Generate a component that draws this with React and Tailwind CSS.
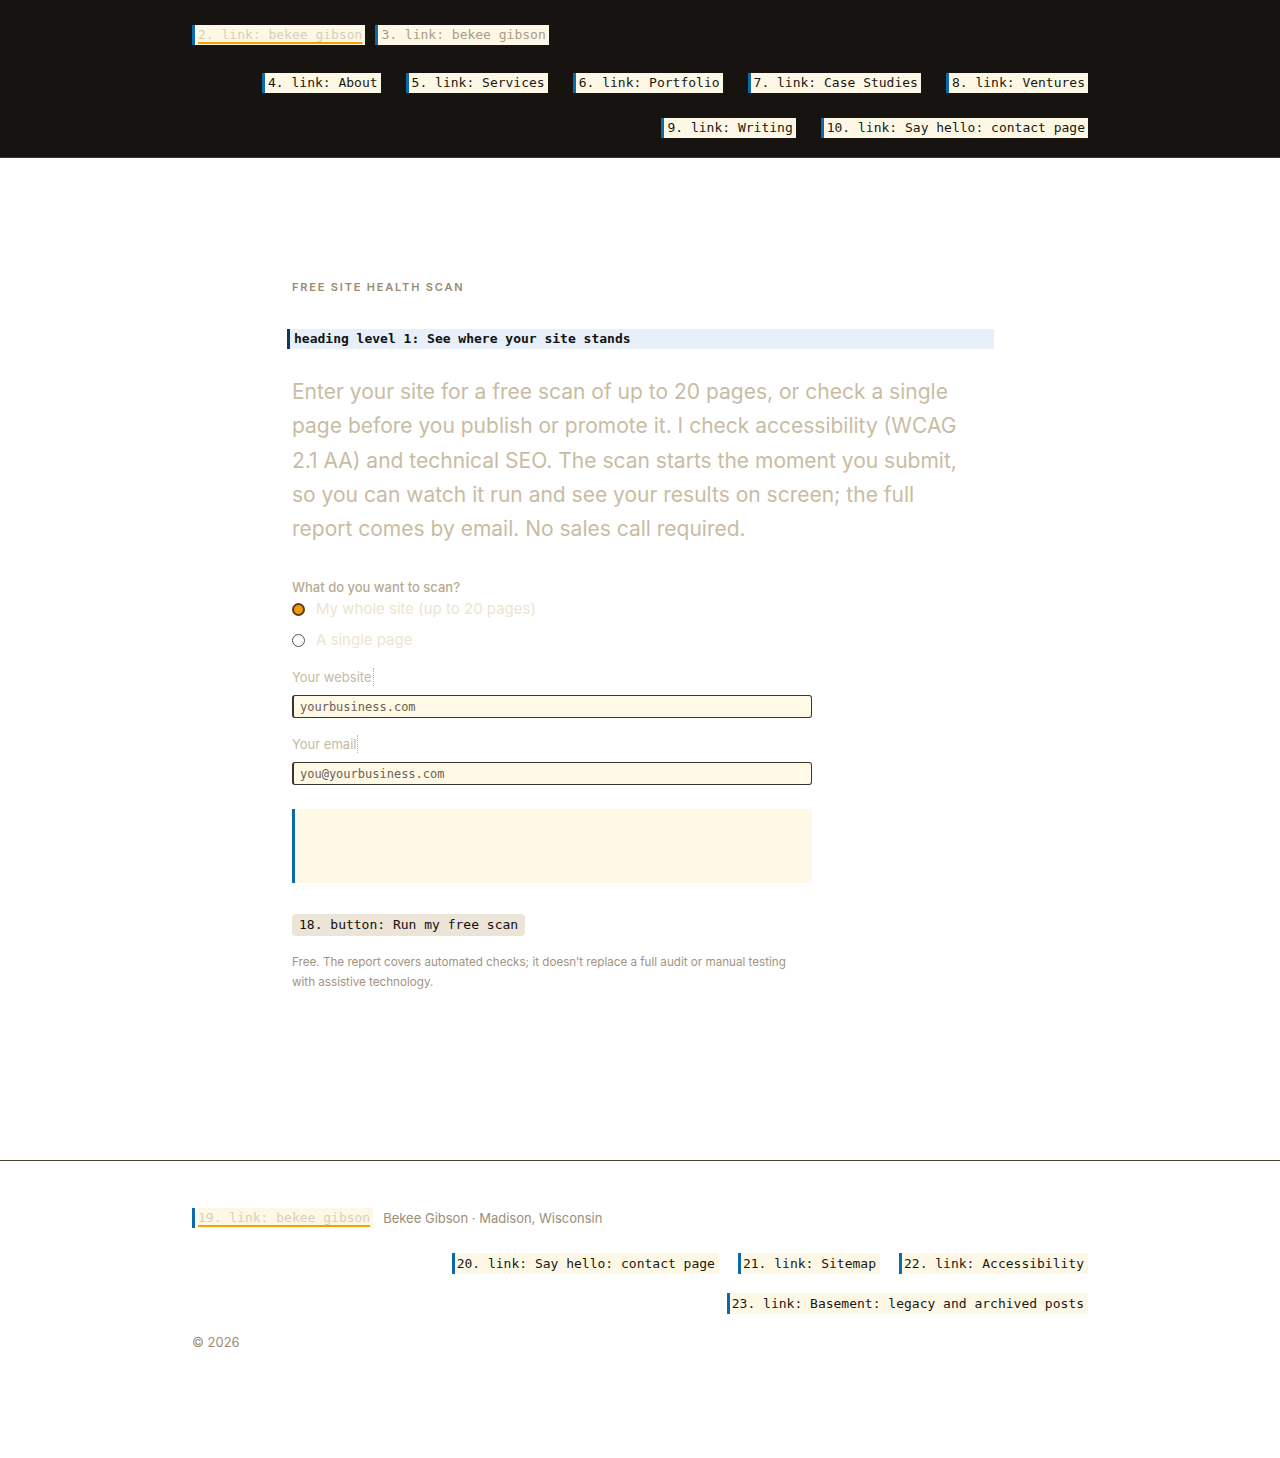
import { useState } from 'react'

const mono = { fontFamily: '"DejaVu Sans Mono", "Liberation Mono", monospace' }

// little cream tag used for every link / control label
function Tag({ children, className = '' }) {
  return (
    <a
      href="#"
      style={mono}
      className={`inline-block border-l-[3px] border-[#0b6aa9] bg-[#fdf8e5] px-[3px] text-[13px] leading-[20px] text-[#1a1712] whitespace-nowrap ${className}`}
    >
      {children}
    </a>
  )
}

const navLinks = ['About', 'Services', 'Portfolio', 'Case Studies', 'Ventures', 'Writing', 'Say hello: contact page']
const footLinks = ['Say hello: contact page', 'Sitemap', 'Accessibility', 'Basement: legacy and archived posts']

export default function App() {
  const [scope, setScope] = useState('site')

  return (
    <div className="min-h-[1458px] bg-white" style={{ fontFamily: 'Inter, "Noto Sans", sans-serif' }}>
      {/* Top bar */}
      <header className="bg-[#171310] border-b border-[#3d352c] pt-[25px] pb-[19px]">
        <div className="mx-auto w-[896px]">
          <div className="flex gap-[10px]">
            <Tag className="!text-[#d8cfba] underline decoration-[#f5a000] decoration-2 underline-offset-[3px]">2. link: bekee gibson</Tag>
            <Tag className="!text-[#a89d88]">3. link: bekee gibson</Tag>
          </div>
          <nav className="mt-[28px] flex flex-wrap justify-end gap-[25px]">
            {navLinks.map((l, i) => (
              <Tag key={l}>{`${i + 4}. link: ${l}`}</Tag>
            ))}
          </nav>
        </div>
      </header>

      {/* Scan form */}
      <main className="mx-auto w-[696px] pt-[121px] pb-[168px]">
        <p className="text-[11px] font-semibold tracking-[0.165em] uppercase text-[#9a8a72] leading-[16px]">
          Free site health scan
        </p>

        <h1
          style={mono}
          className="mt-[34px] -ml-[5px] w-[707px] border-l-[3px] border-[#0b3b5e] bg-[#e7eff8] pl-[4px] text-[13px] font-bold leading-[20px] text-[#111]"
        >
          heading level 1: See where your site stands
        </h1>

        <p className="mt-[26px] text-[21px] leading-[34.3px] text-[#c9bca4] pr-[14px]">
          Enter your site for a free scan of up to 20 pages, or check a single page before you publish or
          promote it. I check accessibility (WCAG 2.1 AA) and technical SEO. The scan starts the moment you
          submit, so you can watch it run and see your results on screen; the full report comes by email. No
          sales call required.
        </p>

        <form className="mt-[32px] w-[520px]" onSubmit={e => e.preventDefault()}>
          <fieldset>
            <legend className="text-[13px] font-medium leading-[18px] text-[#b9aa91]">What do you want to scan?</legend>
            <label className="mt-[2px] flex items-center gap-[11px] text-[15px] leading-[22px] text-[#ede4cf]">
              <input
                type="radio"
                name="scope"
                checked={scope === 'site'}
                onChange={() => setScope('site')}
                className="appearance-none w-[13px] h-[13px] rounded-full border border-[#5b5048] bg-white checked:bg-[#f39a0c] checked:border-[#5a3e10] checked:border-2"
              />
              My whole site (up to 20 pages)
            </label>
            <label className="mt-[9px] flex items-center gap-[11px] text-[15px] leading-[22px] text-[#ede4cf]">
              <input
                type="radio"
                name="scope"
                checked={scope === 'page'}
                onChange={() => setScope('page')}
                className="appearance-none w-[13px] h-[13px] rounded-full border border-[#5b5048] bg-white checked:bg-[#f39a0c]"
              />
              A single page
            </label>
          </fieldset>

          <label className="mt-[13px] block">
            <span className="inline-block border-r border-dotted border-[#bdb4a4] pr-[1px] text-[13px] leading-[18px] text-[#c6b9a2]">
              Your website
            </span>
            <input
              type="text"
              placeholder="yourbusiness.com"
              style={mono}
              className="mt-[7px] block w-[520px] h-[23px] rounded-[3px] border border-[#3a342d] border-l-2 bg-[#fff9e5] px-[6px] text-[12px] text-[#333] placeholder:text-[#6a6258] outline-none"
            />
          </label>

          <label className="mt-[13px] block">
            <span className="inline-block border-r border-dotted border-[#bdb4a4] pr-[1px] text-[13px] leading-[18px] text-[#c6b9a2]">
              Your email
            </span>
            <input
              type="email"
              placeholder="you@yourbusiness.com"
              style={mono}
              className="mt-[7px] block w-[520px] h-[23px] rounded-[3px] border border-[#3a342d] border-l-2 bg-[#fff9e5] px-[6px] text-[12px] text-[#333] placeholder:text-[#6a6258] outline-none"
            />
          </label>

          <div className="mt-[24px] h-[74px] border-l-[3px] border-[#0b6aa9] bg-[#fef9e6]" />

          <button
            type="submit"
            style={mono}
            className="mt-[31px] rounded-[4px] bg-[#ece4d6] px-[7px] py-[1px] text-[13px] leading-[20px] text-[#111]"
          >
            18. button: Run my free scan
          </button>

          <p className="mt-[16px] w-[500px] text-[11.65px] leading-[20px] text-[#a49480]">
            Free. The report covers automated checks; it doesn’t replace a full audit or manual testing with
            assistive technology.
          </p>
        </form>
      </main>

      {/* Footer */}
      <footer className="border-t border-[#4a3f33] pt-[47px] pb-[100px]">
        <div className="mx-auto w-[896px]">
          <div className="flex items-center gap-[10px]">
            <Tag className="!text-[#d9cfb8] underline decoration-[#f5a000] decoration-2 underline-offset-[3px]">19. link: bekee gibson</Tag>
            <span className="text-[13px] text-[#9c8e78]">Bekee Gibson · Madison, Wisconsin</span>
          </div>
          <nav className="mt-[25px] flex flex-wrap justify-end gap-[19px]">
            {footLinks.map((l, i) => (
              <Tag key={l} className="!px-[2px] !pr-[4px] leading-[21px]">{`${i + 20}. link: ${l}`}</Tag>
            ))}
          </nav>
          <p className="mt-[19px] text-[13px] text-[#9c8e78]">© 2026</p>
        </div>
      </footer>
    </div>
  )
}
